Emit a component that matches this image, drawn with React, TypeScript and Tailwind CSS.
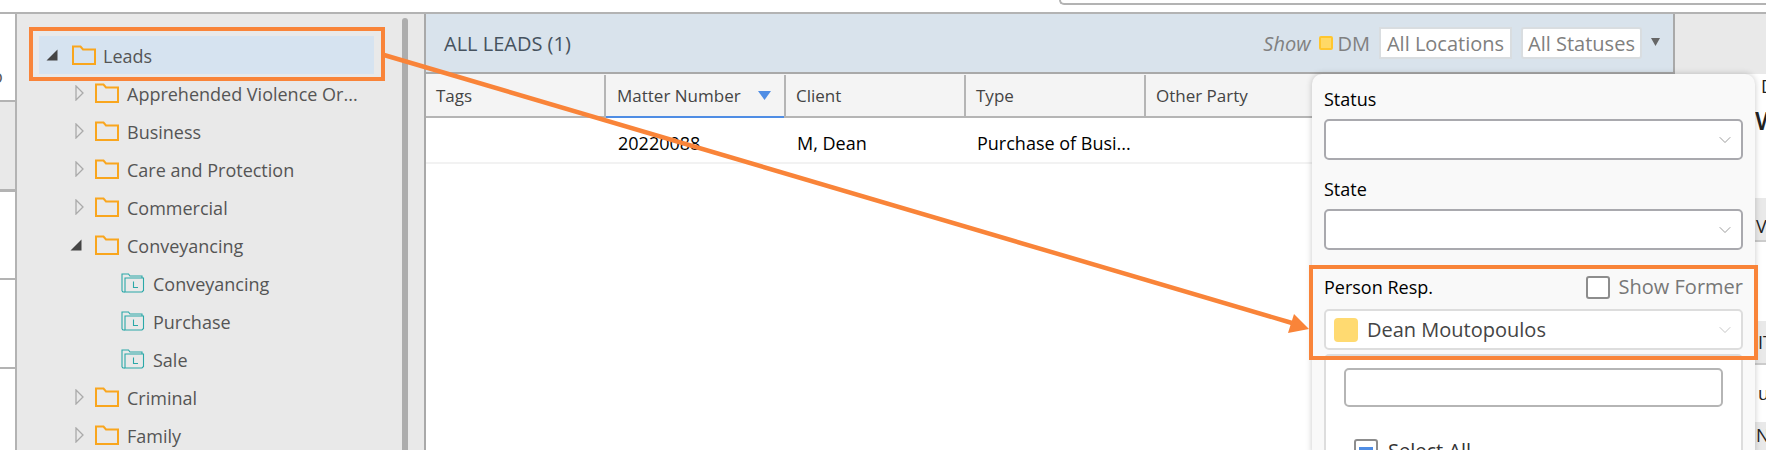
import { ChevronDown } from "lucide-react";

const FONT = "font-['Open_Sans','Noto_Sans',sans-serif]";

function Folder() {
  return (
    <svg width="24" height="20" viewBox="0 0 24 20" fill="none" className="shrink-0">
      <path d="M1 19V1.5H8.5L11 4.5H23V19H1Z" stroke="#f9a61e" strokeWidth="2" />
    </svg>
  );
}

function LeadFolder() {
  return (
    <svg width="24" height="20" viewBox="0 0 24 20" fill="none" className="shrink-0">
      <path d="M1 18V1H7.5L9 3H21V5M4 19H2L1 18" stroke="#2aa8a8" strokeWidth="1.1" />
      <path d="M4 19V5H22.5V17.5L21 19H4Z" stroke="#2aa8a8" strokeWidth="1.1" />
      <path d="M12.5 8.5V14.5H17" stroke="#2aa8a8" strokeWidth="1.1" />
    </svg>
  );
}

function Arrow({ open }: { open: boolean }) {
  if (open) {
    return (
      <svg width="12" height="12" viewBox="0 0 12 12" className="shrink-0">
        <path d="M0.5 11.5L11.5 0.5V11.5H0.5Z" fill="#444" />
      </svg>
    );
  }
  return (
    <svg width="9" height="16" viewBox="0 0 9 16" fill="none" className="shrink-0">
      <path d="M1 1L8 8L1 15V1Z" stroke="#aaa" strokeWidth="1.3" />
    </svg>
  );
}

const branches = [
  { name: "Apprehended Violence Or...", kind: "closed" },
  { name: "Business", kind: "closed" },
  { name: "Care and Protection", kind: "closed" },
  { name: "Commercial", kind: "closed" },
  { name: "Conveyancing", kind: "open" },
  { name: "Conveyancing", kind: "leaf" },
  { name: "Purchase", kind: "leaf" },
  { name: "Sale", kind: "leaf" },
  { name: "Criminal", kind: "closed" },
  { name: "Family", kind: "closed" },
];

function TreeRow({ name, kind }: { name: string; kind: string }) {
  if (kind === "leaf") {
    return (
      <div className="flex h-[38px] items-center pl-[104px]">
        <LeadFolder />
        <span className="ml-2 pt-[2px]">{name}</span>
      </div>
    );
  }
  return (
    <div className="flex h-[38px] items-center">
      {kind === "open" ? (
        <div className="ml-[53px] mr-[14px] flex w-[11px]">
          <Arrow open />
        </div>
      ) : (
        <div className="ml-[58px] mr-[13px] flex w-[7px]">
          <Arrow open={false} />
        </div>
      )}
      <Folder />
      <span className="ml-2 pt-[2px]">{name}</span>
    </div>
  );
}

function Tree() {
  return (
    <div className="flex h-full w-[407px] shrink-0 bg-[#e9e9e9] text-[18px] text-[#555]">
      <div className="w-[385px] shrink-0 pt-[22px]">
        <div className="ml-[22px] flex h-[38px] w-[335px] items-center bg-[#d6e3f0] pl-[7px]">
          <Arrow open />
          <div className="ml-[14px]">
            <Folder />
          </div>
          <span className="ml-[7px] pt-[2px]">Leads</span>
        </div>
        {branches.map((b, i) => (
          <TreeRow key={i} name={b.name} kind={b.kind} />
        ))}
      </div>
      <div className="mt-[4px] h-full w-[6px] rounded-t-full bg-[#adadad]" />
    </div>
  );
}

function LeftStrip() {
  return (
    <div className="flex h-full w-[17px] shrink-0 flex-col border-r-2 border-[#b3b3b3] text-[18px] text-[#555]">
      <div className="h-[88px] shrink-0 overflow-hidden border-b-2 border-[#b3b3b3] bg-white">
        <div className="-ml-[8px] mt-[50px] leading-[24px]">o</div>
      </div>
      <div className="h-[90px] shrink-0 border-b-[3px] border-[#b3b3b3] bg-[#e9e9e9]" />
      <div className="h-[88px] shrink-0 border-b-2 border-[#b3b3b3] bg-white" />
      <div className="h-[89px] shrink-0 border-b-2 border-[#b3b3b3] bg-white" />
      <div className="flex-1 bg-white" />
    </div>
  );
}

function LeadsHeader() {
  return (
    <div className="flex h-[60px] items-center justify-between border-r-2 border-b-2 border-[#a9a9a9] bg-[#d9e3ec] pl-[18px] pr-[13px] text-[20px]">
      <span className="pt-[2px] text-[#46525e]">ALL LEADS (1)</span>
      <div className="flex items-center text-[#808080]">
        <span className="pt-[2px] italic">Show</span>
        <div className="ml-2 h-[14px] w-[14px] rounded-[2px] border-2 border-[#ffc62e] bg-[#ffd966]" />
        <span className="ml-[5px] pt-[2px]">DM</span>
        <div className="ml-[9px] flex h-[32px] w-[133px] items-center justify-center border-2 border-[#d9dde0] bg-white pt-[1px]">
          All Locations
        </div>
        <div className="ml-[9px] flex h-[32px] w-[121px] items-center justify-center rounded-[3px] border-2 border-[#d9dde0] bg-white pt-[1px]">
          All Statuses
        </div>
        <svg width="9" height="8" viewBox="0 0 9 8" className="mb-[3px] ml-[9px]">
          <path d="M0 0H9L4.5 8Z" fill="#666" />
        </svg>
      </div>
    </div>
  );
}

function Grid() {
  return (
    <div>
      <div className="flex h-[44px] border-b-2 border-[#b5b5b5] bg-[#f4f4f4] pt-[1px] text-[17px] text-[#444]">
        <div className="flex w-[180px] items-center border-r-2 border-[#b5b5b5] pl-[10px]">Tags</div>
        <div className="relative flex w-[180px] items-center border-r-2 border-[#b5b5b5] pl-[11px]">
          Matter Number
          <svg width="13" height="9" viewBox="0 0 13 9" className="ml-[17px]">
            <path d="M0 0H13L6.5 9Z" fill="#4f8de4" />
          </svg>
          <div className="absolute -bottom-[2px] left-0 right-0 h-[2px] bg-[#4f8de4]" />
        </div>
        <div className="flex w-[180px] items-center border-r-2 border-[#b5b5b5] pl-[10px]">Client</div>
        <div className="flex w-[180px] items-center border-r-2 border-[#b5b5b5] pl-[10px]">Type</div>
        <div className="flex w-[180px] items-center pl-[10px]">Other Party</div>
      </div>
      <div className="flex h-[46px] items-center border-b-2 border-[#f2f2f2] bg-white pt-[6px] text-[18px] text-black">
        <div className="w-[180px]" />
        <div className="w-[180px] pl-[12px]">20220088</div>
        <div className="w-[180px] pl-[11px]">M, Dean</div>
        <div className="w-[180px] pl-[11px]">Purchase of Busi...</div>
      </div>
    </div>
  );
}

function SidePanel() {
  return (
    <div className="flex h-full flex-1 flex-col overflow-hidden text-[18px] text-[#222]">
      <div className="h-[60px] shrink-0 bg-[#e9e9e9]" />
      <div className="h-[124px] shrink-0 bg-white leading-[20px]">
        <div className="mt-[2px] pl-[86px]">D</div>
        <div className="mt-[14px] pl-[80px] text-[26px] font-semibold">W</div>
      </div>
      <div className="flex h-[44px] shrink-0 items-end border-b-2 border-[#ccc] bg-[#e9e9e9] pl-[81px]">V</div>
      <div className="h-[79px] shrink-0 bg-white" />
      <div className="flex h-[44px] shrink-0 items-center border-b-2 border-[#ccc] bg-[#e9e9e9] pl-[83px]">IT</div>
      <div className="flex h-[57px] shrink-0 items-center bg-white pl-[83px]">u</div>
      <div className="flex-1 bg-[#e9e9e9] pl-[81px]">N</div>
    </div>
  );
}

function FilterSelect() {
  return (
    <div className="flex h-[41px] items-center justify-end rounded-[5px] border-2 border-[#a9a9ae] bg-white pr-[6px]">
      <ChevronDown size={20} strokeWidth={1} color="#888" />
    </div>
  );
}

function FilterPopup() {
  return (
    <div className="absolute left-[1312px] top-[74px] h-[380px] w-[443px] rounded-t-[10px] bg-[#f9f9f9] px-[12px] pt-[12px] text-[18px] text-black shadow-[0_0_6px_rgba(0,0,0,0.22)]">
      <div className="h-[33px] leading-[26px]">Status</div>
      <FilterSelect />
      <div className="flex h-[49px] items-center pt-[9px]">State</div>
      <FilterSelect />
      <div className="mb-[4px] mt-[19px] flex h-[36px] items-center justify-between">
        <span>Person Resp.</span>
        <div className="flex items-center text-[20px] text-[#777]">
          <div className="h-[23px] w-[24px] rounded-[3px] border-2 border-[#8d8d8d] bg-white" />
          <span className="ml-[9px]">Show Former</span>
        </div>
      </div>
      <div className="flex h-[41px] items-center rounded-[5px] border-2 border-[#ddd] bg-white pl-[8px] pr-[6px] text-[20px] text-[#444]">
        <div className="h-[24px] w-[24px] rounded-[4px] bg-[#ffda71]" />
        <span className="ml-[9px] flex-1">Dean Moutopoulos</span>
        <ChevronDown size={20} strokeWidth={1} color="#bbb" />
      </div>
      <div className="mt-[4px] h-[120px] rounded-t-[5px] border-2 border-[#ddd] bg-white px-[18px] pt-[12px]">
        <div className="h-[39px] rounded-[5px] border-2 border-[#b5b5b5] bg-white" />
        <div className="ml-[10px] mt-[32px] flex items-start">
          <div className="relative h-[23px] w-[24px] shrink-0 rounded-[3px] border-2 border-[#8d8d8d] bg-white">
            <div className="absolute left-[3px] right-[3px] top-[6px] h-[3px] bg-[#4f8de4]" />
          </div>
          <span className="ml-[10px] text-[20px] leading-[24px] text-[#333]">Select All</span>
        </div>
      </div>
    </div>
  );
}

function Annotations() {
  return (
    <>
      <div className="absolute left-[29px] top-[27px] h-[54px] w-[356px] border-4 border-[#f98439]" />
      <div className="absolute left-[1309px] top-[265px] h-[95px] w-[449px] border-4 border-[#f98439]" />
      <svg width="1766" height="450" className="pointer-events-none absolute left-0 top-0">
        <line x1="384" y1="55" x2="1292" y2="323" stroke="#f98439" strokeWidth="4.5" />
        <polygon points="1294,314 1288,333 1309,329" fill="#f98439" />
      </svg>
    </>
  );
}

export default function App() {
  return (
    <div className={`relative h-[450px] w-[1766px] overflow-hidden bg-white ${FONT}`}>
      <div className="flex h-[12px] justify-end">
        <div className="h-[5px] w-[707px] rounded-bl-[6px] border-b-2 border-l-2 border-[#b3b3b3]" />
      </div>
      <div className="h-[2px] bg-[#b3b3b3]" />
      <div className="flex h-[436px]">
        <LeftStrip />
        <Tree />
        <div className="h-full w-[2px] shrink-0 bg-[#a9a9a9]" />
        <div className="h-full w-[1249px] shrink-0">
          <LeadsHeader />
          <Grid />
        </div>
        <SidePanel />
      </div>
      <FilterPopup />
      <Annotations />
    </div>
  );
}
